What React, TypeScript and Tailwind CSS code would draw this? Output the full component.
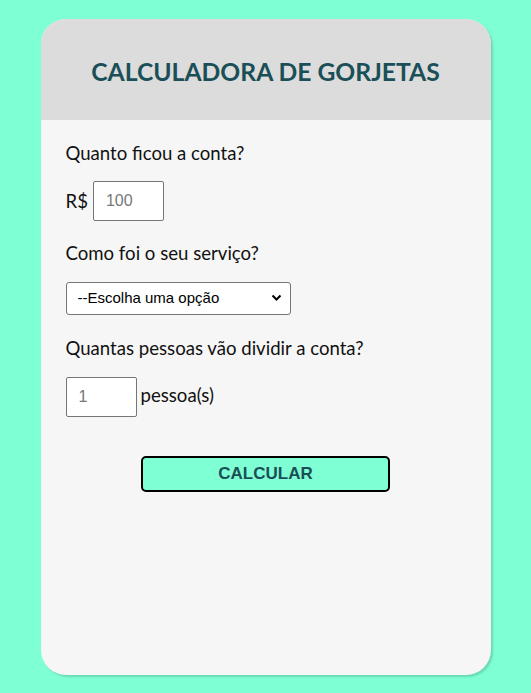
import React from "react";

export default function App() {
  return (
    <div className="min-h-[693px] w-full bg-[#7fffd4] pt-[19px] pb-[18px]">
      <div className="mx-auto w-[450px] h-[656px] rounded-[25px] bg-[#f6f6f6] overflow-hidden shadow-[2px_2px_2px_rgba(0,0,0,0.15)] font-['Lato',sans-serif]">
        <div className="h-[101px] bg-[#dcdcdc] flex items-center justify-center">
          <h1 className="text-[24.7px] font-bold text-[#1a4f57] mt-[4px]">
            CALCULADORA DE GORJETAS
          </h1>
        </div>
        <div className="px-[25px] pt-[22px] text-[18.6px] text-[#111]">
          <p className="leading-[22px]">Quanto ficou a conta?</p>
          <div className="mt-[17px] flex items-center gap-[5px]">
            <span className="leading-[22px]">R$</span>
            <input
              type="number"
              placeholder="100"
              className="w-[71px] h-[40px] border border-[#767676] rounded-[2px] bg-white px-[12px] text-[16px] font-['Liberation_Sans',Arial,sans-serif] placeholder:text-[#777] outline-none"
            />
          </div>
          <p className="mt-[21px] leading-[22px]">Como foi o seu serviço?</p>
          <div className="mt-[18px] relative w-[225px] h-[33px]">
            <select className="w-[225px] h-[33px] appearance-none border border-[#767676] rounded-[3px] bg-white pl-[11px] text-[15px] text-black font-['Liberation_Sans',Arial,sans-serif] outline-none">
              <option>--Escolha uma opção</option>
            </select>
            <svg
              className="pointer-events-none absolute right-[9px] top-[12px]"
              width="11"
              height="8"
              viewBox="0 0 11 8"
            >
              <path d="M1.5 1.5 L5.5 5.5 L9.5 1.5" fill="none" stroke="#000" strokeWidth="2" />
            </svg>
          </div>
          <p className="mt-[22px] leading-[22px]">Quantas pessoas vão dividir a conta?</p>
          <div className="mt-[18px] flex items-center gap-[4px]">
            <input
              type="number"
              placeholder="1"
              className="w-[71px] h-[40px] border border-[#767676] rounded-[2px] bg-white px-[12px] text-[16px] font-['Liberation_Sans',Arial,sans-serif] placeholder:text-[#777] outline-none"
            />
            <span className="leading-[22px] -mt-[4px]">pessoa(s)</span>
          </div>
          <div className="mt-[39px] flex justify-center">
            <button className="w-[249px] h-[36px] bg-[#7fffd4] border-2 border-black rounded-[5px] text-[17px] font-bold text-[#1a4f57] font-['Liberation_Sans',Arial,sans-serif]">
              CALCULAR
            </button>
          </div>
        </div>
      </div>
    </div>
  );
}
